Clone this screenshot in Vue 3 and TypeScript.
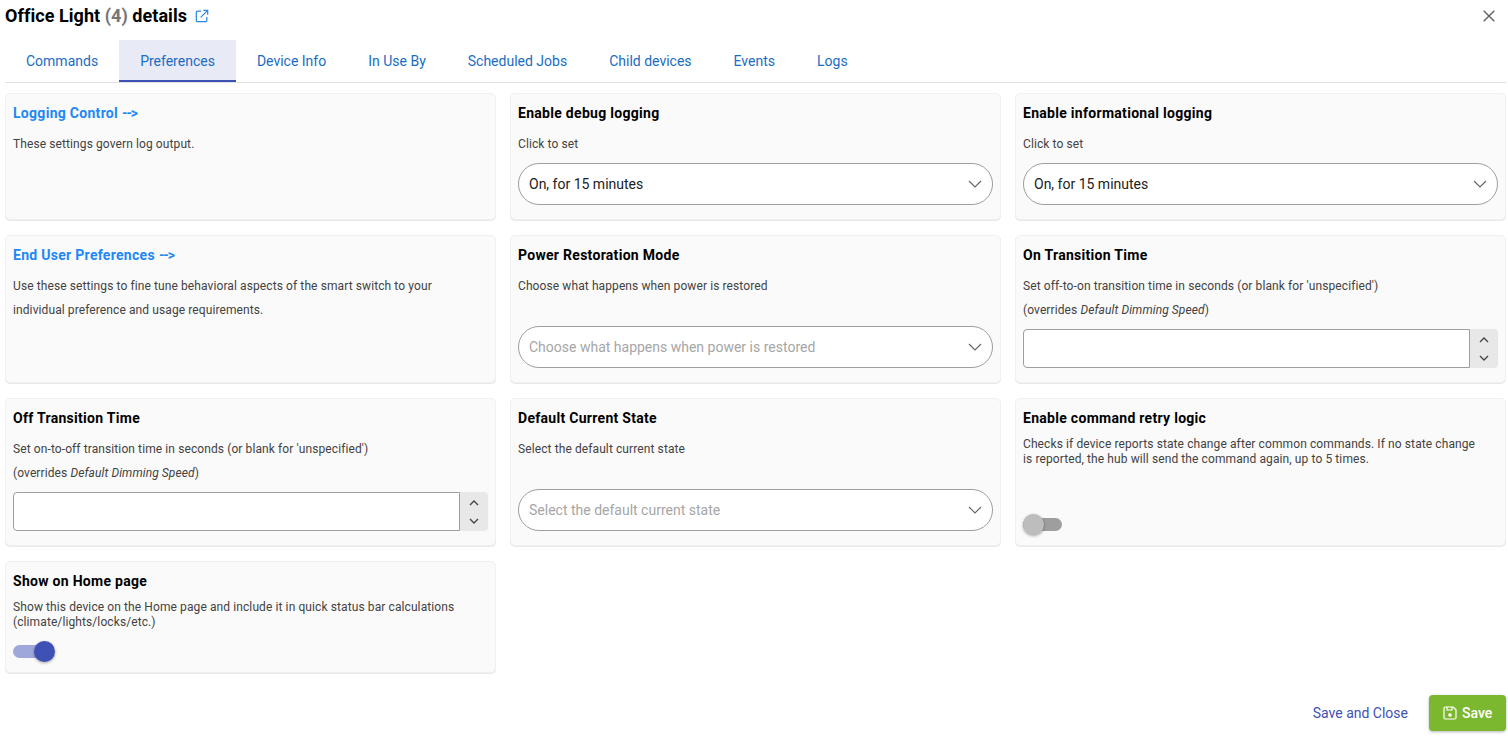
<script setup lang="ts">
type Card = {
  title: string
  kind: 'text' | 'select' | 'number' | 'toggle'
  desc?: string
  section?: boolean
  overrides?: boolean
  compact?: boolean
  value?: string
  on?: boolean
}

const tabs = ['Commands', 'Preferences', 'Device Info', 'In Use By', 'Scheduled Jobs', 'Child devices', 'Events', 'Logs']

const cards: Card[] = [
  { title: 'Logging Control', kind: 'text', section: true, desc: 'These settings govern log output.' },
  { title: 'Enable debug logging', kind: 'select', desc: 'Click to set', value: 'On, for 15 minutes' },
  { title: 'Enable informational logging', kind: 'select', desc: 'Click to set', value: 'On, for 15 minutes' },
  {
    title: 'End User Preferences',
    kind: 'text',
    section: true,
    desc: 'Use these settings to fine tune behavioral aspects of the smart switch to your individual preference and usage requirements.',
  },
  { title: 'Power Restoration Mode', kind: 'select', desc: 'Choose what happens when power is restored' },
  {
    title: 'On Transition Time',
    kind: 'number',
    overrides: true,
    desc: "Set off-to-on transition time in seconds (or blank for 'unspecified')",
  },
  {
    title: 'Off Transition Time',
    kind: 'number',
    overrides: true,
    desc: "Set on-to-off transition time in seconds (or blank for 'unspecified')",
  },
  { title: 'Default Current State', kind: 'select', desc: 'Select the default current state' },
  {
    title: 'Enable command retry logic',
    kind: 'toggle',
    compact: true,
    desc: 'Checks if device reports state change after common commands. If no state change is reported, the hub will send the command again, up to 5 times.',
  },
  {
    title: 'Show on Home page',
    kind: 'toggle',
    compact: true,
    on: true,
    desc: 'Show this device on the Home page and include it in quick status bar calculations (climate/lights/locks/etc.)',
  },
]
</script>

<template>
  <div class="dialog">
    <header class="head">
      <h1>Office Light <span class="count">(4)</span> details</h1>
      <svg class="open" width="14" height="14" viewBox="0 0 16 16" fill="none" stroke="#2a86e0" stroke-width="1.4">
        <path d="M7 2.5H2.8A1.3 1.3 0 0 0 1.5 3.8v9.4a1.3 1.3 0 0 0 1.3 1.3h9.4a1.3 1.3 0 0 0 1.3-1.3V9" />
        <path d="M6.5 9.5 14.5 1.5M9.5 1.5h5v5" />
      </svg>
      <svg class="close" width="12" height="12" viewBox="0 0 12 12" fill="none" stroke="#616161" stroke-width="1.4">
        <path d="M.7.7l10.6 10.6M11.3.7.7 11.3" />
      </svg>
    </header>

    <nav class="tabs">
      <a v-for="tab in tabs" :key="tab" class="tab" :class="{ active: tab === 'Preferences' }">{{ tab }}</a>
    </nav>

    <main class="grid">
      <section v-for="card in cards" :key="card.title" class="card">
        <h2 :class="{ section: card.section }">{{ card.title }}<span v-if="card.section" class="arrow">{{ '-->' }}</span></h2>
        <div class="desc" :class="{ compact: card.compact }">
          <p>{{ card.desc }}</p>
          <p v-if="card.overrides">(overrides <em>Default Dimming Speed</em>)</p>
        </div>

        <div v-if="card.kind === 'select'" class="select" :class="{ empty: !card.value }">
          <span>{{ card.value || card.desc }}</span>
          <svg width="14" height="8" viewBox="0 0 14 8" fill="none" stroke="#666" stroke-width="1.2">
            <path d="M1 1l6 6 6-6" />
          </svg>
        </div>

        <div v-else-if="card.kind === 'number'" class="number">
          <div class="number-box"></div>
          <div class="spin">
            <svg width="10" height="6" viewBox="0 0 10 6" fill="none" stroke="#444" stroke-width="1.3">
              <path d="M1 5l4-4 4 4" />
            </svg>
            <svg width="10" height="6" viewBox="0 0 10 6" fill="none" stroke="#444" stroke-width="1.3">
              <path d="M1 1l4 4 4-4" />
            </svg>
          </div>
        </div>

        <div v-else-if="card.kind === 'toggle'" class="toggle" :class="{ on: card.on }">
          <span class="track"></span>
          <span class="thumb"></span>
        </div>
      </section>
    </main>

    <footer class="foot">
      <a class="link">Save and Close</a>
      <button class="save" type="button">
        <svg width="14" height="14" viewBox="0 0 14 14" fill="none" stroke="#fff" stroke-width="1.2">
          <path d="M2.2 1h8l2.8 2.8v8a1.2 1.2 0 0 1-1.2 1.2H2.2A1.2 1.2 0 0 1 1 11.8V2.2A1.2 1.2 0 0 1 2.2 1Z" />
          <path d="M4 1v3h5V1" />
          <circle cx="7" cy="9" r="1.2" fill="#fff" />
        </svg>
        Save
      </button>
    </footer>
  </div>
</template>

<style scoped>
.dialog {
  width: 1508px;
  height: 742px;
  overflow: hidden;
  background: #fff;
  font-family: Roboto, 'Liberation Sans', sans-serif;
  color: #000;
}

.head {
  display: flex;
  align-items: center;
  height: 40px;
  padding: 0 13px 8px 5px;
  box-sizing: border-box;
}

.head h1 {
  margin: 0;
  font-size: 18px;
  font-weight: 700;
  line-height: 32px;
  letter-spacing: 0.05px;
}

.count {
  color: #757575;
}

.open {
  margin-left: 8px;
}

.close {
  margin-left: auto;
}

.tabs {
  display: flex;
  height: 43px;
  margin: 0 2px 10px 5px;
  border-bottom: 1px solid #e0e0e0;
  box-sizing: border-box;
}

.tab {
  display: flex;
  align-items: center;
  height: 42px;
  padding: 0 21px;
  box-sizing: border-box;
  font-size: 14px;
  color: #1a6dc4;
}

.tab.active {
  background: #e8eaf6;
  border-bottom: 2px solid #3f51b5;
  padding-top: 2px;
}

.grid {
  display: grid;
  grid-template-columns: repeat(3, 491px);
  gap: 15px 14px;
  padding-left: 5px;
}

.card {
  display: flex;
  flex-direction: column;
  padding: 9px 7px 10px;
  background: #fafafa;
  border: 1px solid #f0f0f0;
  border-radius: 5px;
  box-shadow: 0 1px 0 #e8e8e8;
}

.card h2 {
  margin: 0 0 8px;
  font-size: 14px;
  font-weight: 700;
  line-height: 20px;
  letter-spacing: 0.29px;
}

.card h2.section {
  color: #1e88f5;
}

.arrow {
  margin-left: 4px;
  letter-spacing: -1.1px;
}

.desc {
  margin-bottom: 7px;
  padding: 1px 12px 0 0;
  font-size: 12px;
  line-height: 24px;
  letter-spacing: 0.1px;
  color: #424242;
}

.desc p {
  margin: 0;
}

.desc.compact {
  margin-bottom: 11px;
  line-height: 15px;
}

.select {
  display: flex;
  align-items: center;
  justify-content: space-between;
  height: 42px;
  margin-top: auto;
  margin-bottom: 4px;
  padding: 0 10px;
  box-sizing: border-box;
  background: #fff;
  border: 1px solid #9e9e9e;
  border-radius: 21px;
  font-size: 14px;
  color: #212121;
}

.select.empty {
  color: #a6a6a6;
}

.number {
  display: flex;
  height: 39px;
  margin-top: auto;
  margin-bottom: 4px;
}

.number-box {
  flex: 1;
  background: #fff;
  border: 1px solid #9e9e9e;
  border-radius: 4px 0 0 4px;
}

.spin {
  display: flex;
  flex-direction: column;
  align-items: center;
  justify-content: center;
  gap: 12px;
  width: 28px;
  background: #e8e8e8;
  border-radius: 0 4px 4px 0;
}

.toggle {
  position: relative;
  width: 42px;
  height: 21px;
  margin-top: auto;
}

.track {
  position: absolute;
  top: 4px;
  left: 0;
  width: 39px;
  height: 13px;
  border-radius: 7px;
  background: #9e9e9e;
}

.thumb {
  position: absolute;
  top: 0;
  left: 0;
  width: 21px;
  height: 21px;
  border-radius: 50%;
  background: #bdbdbd;
  box-shadow: 0 1px 3px rgba(0, 0, 0, 0.35);
}

.toggle.on .track {
  width: 36px;
  background: #9fa8da;
}

.toggle.on .thumb {
  left: 21px;
  background: #3f51b5;
}

.foot {
  display: flex;
  align-items: center;
  justify-content: flex-end;
  gap: 21px;
  margin-top: 22px;
  padding-right: 2px;
}

.link {
  font-size: 14px;
  color: #3f51b5;
}

.save {
  display: flex;
  align-items: center;
  gap: 5px;
  width: 77px;
  height: 36px;
  padding: 0 0 0 14px;
  background: #7cb82f;
  border: 0;
  border-radius: 4px;
  box-shadow: 0 1px 3px rgba(0, 0, 0, 0.3);
  font-family: inherit;
  font-size: 14px;
  font-weight: 500;
  color: #fff;
}
</style>
